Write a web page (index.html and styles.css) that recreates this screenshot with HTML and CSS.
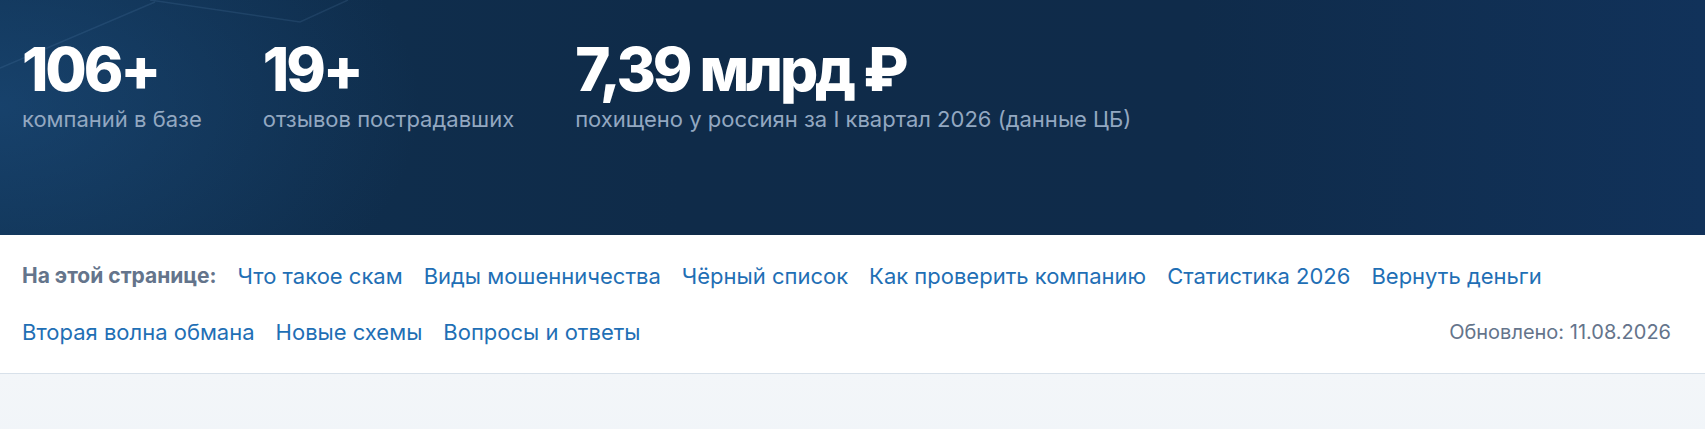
FILE: index.html
```
<!DOCTYPE html>
<html lang="ru">
<head>
<meta charset="utf-8">
<title>Скам</title>
<link rel="stylesheet" href="styles.css">
</head>
<body>
<section class="hero">
  <svg class="hero-lines" width="420" height="120" viewBox="0 0 420 120" aria-hidden="true">
    <polyline points="0,68 155,2" />
    <polyline points="150,0 300,22 348,0" />
  </svg>
  <div class="stats">
    <div class="stat">
      <div class="stat-value">106+</div>
      <div class="stat-label">компаний в базе</div>
    </div>
    <div class="stat">
      <div class="stat-value">19+</div>
      <div class="stat-label">отзывов пострадавших</div>
    </div>
    <div class="stat">
      <div class="stat-value">7,39 млрд ₽</div>
      <div class="stat-label">похищено у россиян за I квартал 2026 (данные ЦБ)</div>
    </div>
  </div>
</section>
<nav class="toc">
  <span class="toc-label">На этой странице:</span>
  <a class="toc-link" href="#what">Что такое скам</a>
  <a class="toc-link" href="#types">Виды мошенничества</a>
  <a class="toc-link" href="#black">Чёрный список</a>
  <a class="toc-link" href="#check">Как проверить компанию</a>
  <a class="toc-link" href="#stats">Статистика 2026</a>
  <a class="toc-link" href="#refund">Вернуть деньги</a>
  <a class="toc-link" href="#wave">Вторая волна обмана</a>
  <a class="toc-link" href="#new">Новые схемы</a>
  <a class="toc-link" href="#faq">Вопросы и ответы</a>
  <span class="toc-updated">Обновлено: 11.08.2026</span>
</nav>
<div class="page-bg"></div>
</body>
</html>
```
FILE: styles.css
```
* { box-sizing: border-box; }
html, body { margin: 0; padding: 0; }
body {
  font-family: "Inter", "Noto Sans", "DejaVu Sans", sans-serif;
  background: #f1f5f9;
}
.hero {
  position: relative;
  height: 235px;
  padding: 39px 22px 0;
  overflow: hidden;
  background:
    radial-gradient(ellipse 420px 260px at 0% 45%, rgba(30, 80, 130, 0.55), rgba(30, 80, 130, 0) 100%),
    linear-gradient(90deg, #0f3050 0%, #0f2b49 40%, #0f2b4a 70%, #11325a 100%);
}
.hero-lines {
  position: absolute;
  left: 0;
  top: 0;
}
.hero-lines polyline {
  fill: none;
  stroke: rgba(120, 170, 220, 0.13);
  stroke-width: 1.5;
}
.stats {
  position: relative;
  display: flex;
  gap: 61px;
}
.stat-value {
  font-size: 60px;
  line-height: 60px;
  font-weight: 800;
  letter-spacing: -0.052em;
  color: #ffffff;
}
.stat-label {
  margin-top: 5px;
  font-size: 22px;
  line-height: 30px;
  color: #93a8c1;
}
.toc {
  display: flex;
  flex-wrap: wrap;
  align-items: center;
  column-gap: 21px;
  row-gap: 26px;
  padding: 26px 34px 26px 22px;
  background: #ffffff;
  border-bottom: 1px solid #d8e1ea;
  font-size: 22px;
  line-height: 30px;
}
.toc-label {
  font-size: 21px;
  font-weight: 700;
  color: #64748b;
}
.toc-link {
  color: #1f6fb5;
  text-decoration: none;
}
.toc-updated {
  margin-left: auto;
  font-size: 20px;
  color: #64748b;
}
.page-bg {
  height: 60px;
  background: linear-gradient(180deg, #f3f6f9, #f1f5f9);
}
```
